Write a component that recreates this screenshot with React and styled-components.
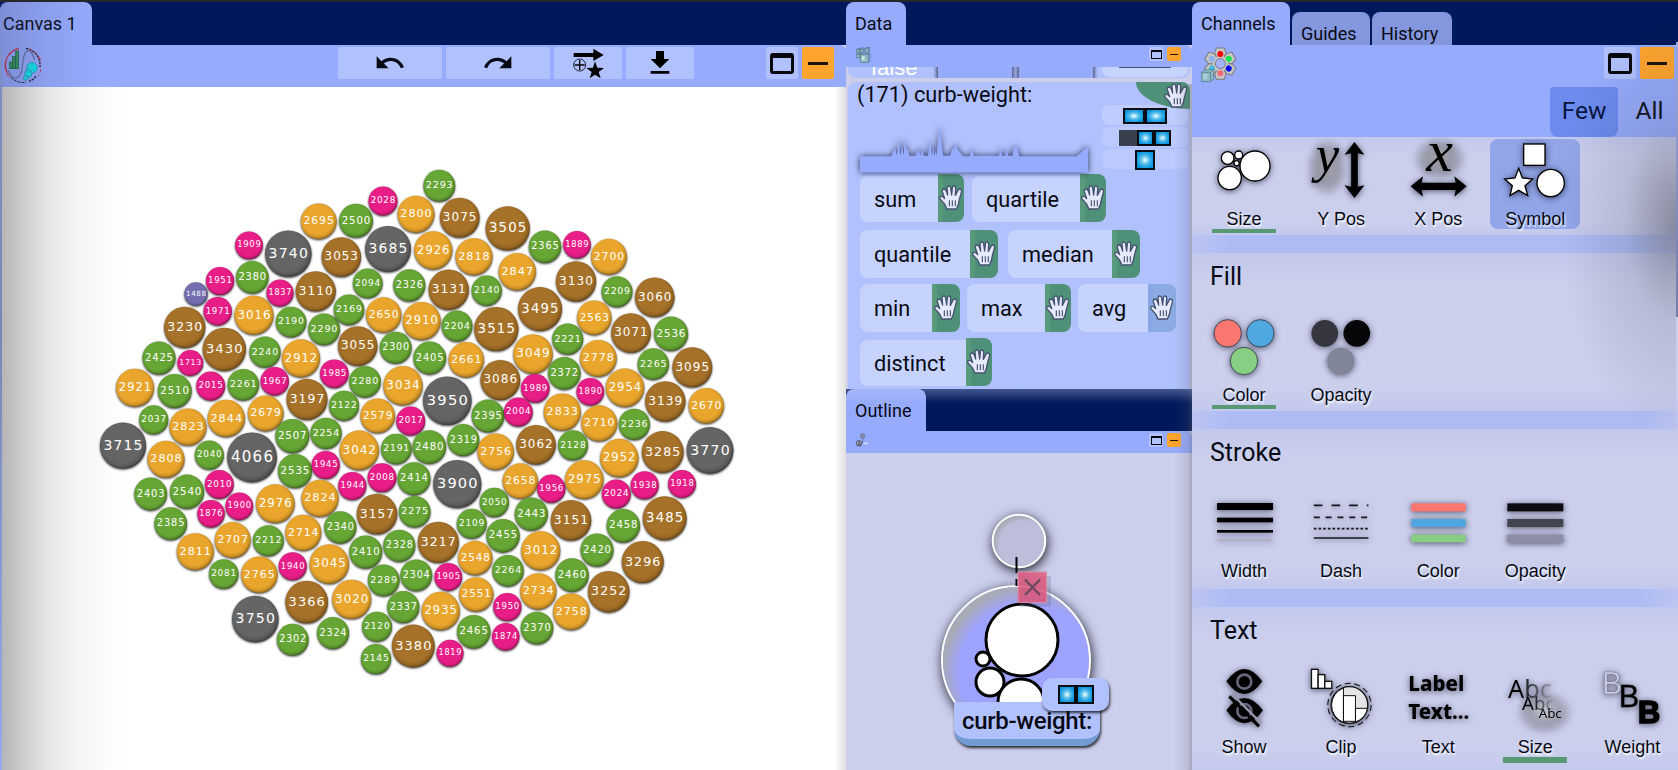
import React from "react";
import styled, { createGlobalStyle } from "styled-components";
import { MdUndo, MdRedo } from "react-icons/md";

const Global = createGlobalStyle`
  * { box-sizing: border-box; }
  html, body { margin: 0; background: #cbcfec; overflow: hidden; }
  body { font-family: Roboto, "Liberation Sans", sans-serif; color: #070a14; }
  svg { display: block; }
`;

const c = {
  navy: "#00185c",
  bar: "#97abfd",
  card: "#b1c1fd",
  chip: "#c7d3ff",
  panel: "#cbcfec",
  green: "#4f9178",
  orange: "#ffa52e",
};

/* ---------- window frame ---------- */

const Workspace = styled.div`
  width: 1678px;
  height: 770px;
  display: grid;
  grid-template-columns: 846px 346px 486px;
  border-top: 2px solid #25272b;
  overflow: hidden;
`;

const Column = styled.div`
  display: flex;
  flex-direction: column;
  min-width: 0;
  min-height: 0;
  position: relative;
  overflow: hidden;
`;

const TabStrip = styled.div`
  height: ${(p) => p.$h || 43}px;
  flex: none;
  display: flex;
  align-items: flex-end;
  gap: 2px;
  background: ${c.navy};
`;

const Tab = styled.div`
  width: ${(p) => p.$w}px;
  height: ${(p) => (p.$idle ? 33 : p.$h || 43)}px;
  padding: ${(p) => (p.$idle ? "11px 9px" : "11px 0 0")};
  padding-left: ${(p) => p.$pad || 9}px;
  border-radius: 8px 8px 0 0;
  background: ${(p) => (p.$idle ? "#8496dd" : c.bar)};
  font-size: 18px;
  line-height: 21px;
  white-space: nowrap;
`;

const Toolbar = styled.div`
  flex: none;
  height: ${(p) => p.$h}px;
  display: flex;
  align-items: flex-start;
  padding: 2px ${(p) => p.$pr || 12}px 0 ${(p) => p.$pl || 4}px;
  background: ${c.bar};
  border-radius: 0 6px 0 0;
`;

const Spacer = styled.div`
  flex: ${(p) => (p.$w ? "none" : 1)};
  width: ${(p) => p.$w || 0}px;
`;

const ToolButton = styled.div`
  width: ${(p) => p.$w}px;
  height: ${(p) => p.$h || 32}px;
  margin-right: ${(p) => (p.$mr === undefined ? 4 : p.$mr)}px;
  display: flex;
  align-items: center;
  justify-content: center;
  border-radius: 2px;
  background: ${(p) => (p.$hot ? c.orange : c.card)};
`;

const Minus = styled.div`
  width: ${(p) => p.$w}px;
  height: ${(p) => p.$t}px;
  background: #1c1408;
`;

const MaxGlyph = styled.div`
  width: ${(p) => (p.$small ? 11 : 24)}px;
  height: ${(p) => (p.$small ? 9 : 21)}px;
  border: ${(p) => (p.$small ? 1 : 3)}px solid #05070d;
  border-top-width: ${(p) => (p.$small ? 2 : 5)}px;
  border-radius: ${(p) => (p.$small ? 0 : 3)}px;
`;

/* Soft darkening that lies over a panel's edge */
const EdgeShade = styled.div`
  position: absolute;
  pointer-events: none;
  left: ${(p) => p.$l};
  right: ${(p) => p.$r};
  top: ${(p) => p.$t || 0}px;
  height: ${(p) => p.$h}px;
  width: ${(p) => p.$w}px;
  background: ${(p) => p.$bg};
`;

/* ---------- canvas ---------- */

const CanvasArea = styled.div`
  flex: 1;
  margin-left: 2px;
  background: #fff;
`;

const BUBBLES = [
  [2028, 383, 201], [2695, 318.7, 221.3], [2500, 356, 220.7], [2800, 416, 214.3], [1909, 249, 245.3],
  [3740, 288.3, 253.7], [3053, 341.3, 257], [3685, 388, 249], [1951, 220, 281], [2380, 252.3, 277.3],
  [1488, 196, 294], [1837, 280, 293], [3110, 315.7, 291.3], [2094, 367.7, 283.3], [2326, 409.3, 285.3],
  [1971, 217.7, 311.3], [3016, 254, 315.3], [2190, 291, 322], [2290, 324, 329.3], [2169, 349, 309.7],
  [2650, 383.7, 315], [3230, 184.7, 327.3], [3430, 224.3, 349.3], [2240, 265, 352], [2912, 301, 358.3],
  [3055, 357.7, 346], [2300, 395.7, 347.7], [2425, 159, 358], [1713, 190.3, 363], [1985, 334.3, 373.7],
  [2280, 365, 381.7], [3034, 403, 385.7], [2921, 135, 387.7], [2510, 174.7, 391], [2015, 210.7, 386],
  [2261, 243.3, 384.7], [1967, 274.7, 381.3], [3197, 307, 399.3], [2122, 344, 405.7], [2579, 377.7, 415.8],
  [2293, 439.3, 185.7], [3075, 459.7, 217.7], [3505, 507.7, 228.3], [2926, 433.3, 250.3], [2818, 474, 256.7],
  [2847, 517.3, 271.7], [2365, 545, 246.7], [1889, 577, 244.7], [2700, 609, 256.7], [3130, 576, 281.3],
  [2209, 617, 291.7], [3060, 654.7, 297.3], [3131, 448.7, 289.7], [2140, 486.7, 290.7], [3495, 540, 309],
  [2563, 594.3, 317.7], [3071, 631, 333], [2536, 671, 333.7], [2910, 421.7, 321], [2204, 457, 326],
  [3515, 496.3, 329], [2221, 567.7, 339], [3049, 533, 354], [2778, 598.3, 358.3], [2265, 653.3, 364],
  [3095, 692.3, 367.3], [2405, 429.7, 358], [2661, 466.3, 359.7], [3086, 500.3, 380], [2372, 564.3, 373.3],
  [1989, 535.3, 388.3], [1890, 590.3, 391.7], [2954, 625, 387.7], [3139, 665.3, 401.3], [2670, 706.3, 405.7],
  [3950, 447.3, 400.7], [2395, 488, 415.8], [2004, 518.3, 412], [2833, 562.3, 412], [2710, 599.3, 423.3],
  [2236, 634.3, 424.3], [2017, 410.7, 421], [2037, 153.7, 419.7], [2823, 188, 427], [2844, 226.3, 418.3],
  [2679, 265.7, 413.3], [3715, 123, 445.7], [2808, 166, 459.3], [2040, 209.3, 455], [4066, 252, 457.3],
  [2507, 292.3, 436], [2254, 326, 433.3], [2535, 295, 471], [1945, 325.7, 465], [3042, 359.3, 450.3],
  [2191, 396.3, 449], [2480, 429.3, 447], [2403, 150.7, 494], [2540, 187, 491.7], [2010, 219.3, 484.3],
  [1900, 239.3, 506.3], [1876, 211, 513.7], [2976, 275.3, 503.7], [2824, 320, 498.3], [1944, 352.3, 486],
  [2008, 382, 477.7], [2414, 414, 478.7], [2385, 170.7, 523.7], [2707, 232.7, 540], [2212, 268.3, 540.7],
  [2714, 303.3, 532.7], [2340, 340.3, 527.3], [3157, 377, 514], [2275, 414.7, 511.7], [2811, 195.3, 551.7],
  [2081, 223.7, 574], [2765, 259.3, 574.7], [1940, 292.7, 566.3], [3045, 329.3, 564], [2410, 365.7, 552],
  [2328, 399.3, 545.7], [2289, 383.7, 580.3], [2304, 416.3, 575.3], [3750, 255.3, 619], [3366, 306.7, 602],
  [3020, 351.7, 599.3], [2337, 403.3, 607], [2302, 292.7, 639.7], [2324, 333, 633], [2120, 377, 626.7],
  [2145, 376, 659], [3380, 413.3, 646], [2319, 463.3, 440], [2756, 495.7, 451.7], [3062, 536, 444.7],
  [2128, 573, 445.3], [2952, 619.3, 458], [3285, 662.7, 452], [3770, 710, 450.3], [3900, 457.3, 484],
  [2658, 520.3, 481], [1956, 551.3, 488.7], [2975, 584.3, 479.7], [2024, 616.3, 494], [1938, 644.7, 485.3],
  [1918, 682, 484], [2050, 494.3, 502.3], [2109, 471.7, 523.7], [2455, 503, 535.7], [2443, 531.3, 514],
  [3151, 571, 520.3], [2458, 623.3, 525.7], [3485, 664.7, 518.3], [3217, 438.3, 542.3], [2548, 475.3, 558],
  [3012, 540.7, 550.7], [2420, 597, 550], [3296, 642.7, 562], [2264, 508, 570.7], [1905, 448.3, 577],
  [2460, 572, 575], [3252, 608.7, 591.7], [2551, 476.3, 594.3], [2734, 538.3, 591.3], [2935, 440.7, 611],
  [1950, 507.3, 607], [2758, 571.3, 611.7], [2465, 473.7, 631.7], [2370, 537, 628], [1874, 505.7, 636.7],
  [1819, 450, 653.3],
];

const fillFor = (v) =>
  v < 1500 ? "#726eb0" : v < 2030 ? "#e91d87" : v < 2545 ? "#66a634" : v < 3050 ? "#eaa62c" : v < 3600 ? "#a67128" : "#656565";

const BubbleGroup = styled.g`
  filter: drop-shadow(0.8px 1.2px 1.3px rgba(0, 0, 0, 0.75));
`;

const BubbleText = styled.text`
  font-family: "DejaVu Sans", sans-serif;
  fill: #fff;
  text-anchor: middle;
  letter-spacing: 0.085em;
`;

function BubbleChart() {
  return (
    <svg width="843" height="683" viewBox="2 87 843 683">
      <defs>
        <radialGradient id="bulge" cx="0.47" cy="0.45" r="0.56">
          <stop offset="0.74" stopColor="#000" stopOpacity="0" />
          <stop offset="0.88" stopColor="#000" stopOpacity="0.12" />
          <stop offset="1" stopColor="#000" stopOpacity="0.42" />
        </radialGradient>
      </defs>
      {BUBBLES.map(([v, x, y]) => {
        const r = 13.9 + 0.0051 * (v - 1909);
        const size = r * 0.605;
        return (
          <g key={v}>
            <BubbleGroup>
              <circle cx={x} cy={y} r={r} fill={fillFor(v)} />
            </BubbleGroup>
            <circle cx={x} cy={y} r={r} fill="url(#bulge)" />
            <BubbleText x={x + size * 0.04} y={y - 0.9 + size * 0.365} fontSize={size}>{v}</BubbleText>
          </g>
        );
      })}
    </svg>
  );
}

/* ---------- shared glyphs ---------- */

function Hand({ size = 25 }) {
  return (
    <svg width={size} height={size} viewBox="0 0 75 75">
      <path
        d="M22 68 L16 56 L3 42 Q0 36 6 34 Q11 33 17 41 L10 20 Q9 13 14 12 Q19 11 22 18 L26 30 L24 9 Q24 3 29 3 Q34 3 35 9 L38 30 L40 8 Q41 2 46 3 Q50 4 50 10 L49 31 L57 16 Q60 10 65 13 Q69 16 67 22 L61 44 Q60 58 52 72 L23 72 Z"
        fill="#e6eafc" stroke="#44516f" strokeWidth="4" strokeLinejoin="round"
      />
      <path d="M31 46 V64 M40 46 V64 M49 46 V64" stroke="#44516f" strokeWidth="3.4" />
    </svg>
  );
}

const Cell = styled.div`
  width: ${(p) => p.$w}px;
  height: ${(p) => p.$h}px;
  border: 2px solid #0a0d14;
  background: ${(p) => (p.$off ? "#3a3f50" : "radial-gradient(ellipse, #d5f3fc 8%, #53bdea 38%, #0793dd 78%)")};
  border-color: ${(p) => (p.$off ? "#3a3f50" : "#0a0d14")};
`;

/* ---------- data panel ---------- */

const DataBody = styled.div`
  height: 322px;
  flex: none;
  padding: 0 2px;
  overflow: hidden;
  background: ${c.panel};
`;

const PeekRow = styled.div`
  height: 11px;
  display: flex;
  align-items: flex-end;
  overflow: hidden;
  border-radius: 0 0 8px 8px;
  background: ${c.card};
`;

const PeekText = styled.div`
  width: 88px;
  padding-left: 23px;
  flex: none;
  color: #fff;
  font-family: "Liberation Sans", sans-serif;
  font-size: 22px;
  line-height: 21px;
`;

const PeekBar = styled.div`
  width: ${(p) => p.$w}px;
  height: 11px;
  flex: none;
  margin-left: ${(p) => p.$ml}px;
  background: ${c.bar};
  box-shadow: 0 0 3px 2px rgba(20, 25, 50, 0.6);
`;

const PeekPill = styled.div`
  width: 86px;
  height: 10px;
  flex: none;
  margin: 0 2px 1px auto;
  padding: 0 17px;
  border-radius: 0 0 8px 8px;
  background: ${c.chip};
`;

const PeekLine = styled.div`
  height: 1px;
  background: #4a536c;
`;

const DataCard = styled.div`
  position: relative;
  height: 307px;
  margin-top: 4px;
  border-radius: 8px 8px 0 0;
  background: ${c.card};
`;

const CardHead = styled.div`
  height: 92px;
  display: flex;
  justify-content: space-between;
`;

const CardTitle = styled.div`
  padding-left: 9px;
  font-size: 21.7px;
  line-height: 26px;
`;

const Spark = styled.svg`
  margin: 17px 0 0 3px;
  overflow: visible;
  filter: drop-shadow(0 0 3px rgba(20, 25, 60, 0.85));
`;

const GripCorner = styled.div`
  position: absolute;
  top: 0;
  right: 0;
  width: 54px;
  height: 27px;
  padding: 1px 1px 0 0;
  display: flex;
  justify-content: flex-end;
  border-radius: 0 8px 0 100%;
  background: ${c.green};
`;

const Types = styled.div`
  width: 86px;
  margin: 23px 2px 0 0;
  display: flex;
  flex-direction: column;
  gap: 2px;
`;

const TypePill = styled.div`
  height: 20px;
  padding-top: 1px;
  display: flex;
  align-items: center;
  justify-content: center;
  border-radius: 7px;
  background: ${(p) => (p.$dim ? "#bbc9ff" : "#bfccff")};
`;

const ChipRow = styled.div`
  display: flex;
  align-items: flex-end;
  gap: ${(p) => p.$gap}px;
  height: 48px;
  margin: 0 0 ${(p) => p.$mb || 6}px 12px;
`;

const Chip = styled.div`
  width: ${(p) => p.$w}px;
  height: 48px;
  display: flex;
  align-items: flex-end;
  border-radius: 8px;
  overflow: hidden;
`;

const ChipLabel = styled.div`
  flex: 1;
  height: ${(p) => p.$h || 48}px;
  padding-left: 14px;
  display: flex;
  align-items: center;
  border-radius: 7px 0 0 7px;
  background: ${c.chip};
  font-size: 21.7px;
`;

const Grip = styled.div`
  width: ${(p) => p.$w || 26}px;
  height: 48px;
  padding-top: 11px;
  display: flex;
  justify-content: center;
  border-left: 5px solid ${(p) => (p.$idle ? "#88a7e3" : "#589a7b")};
  background: ${(p) => (p.$idle ? "#8caae3" : c.green)};
  svg { flex: none; margin-left: -4px; }
`;

const CHIP_ROWS = [
  { gap: 8, mb: 8, chips: [["sum", 104, 26, 46], ["quartile", 134, 26, 46]] },
  { gap: 10, chips: [["quantile", 138, 28], ["median", 132, 28]] },
  { gap: 7, chips: [["min", 100, 28], ["max", 104, 26], ["avg", 98, 28, 48, true]] },
  { gap: 8, chips: [["distinct", 132, 26, 46]] },
];

/* ---------- outline panel ---------- */

const OutlineBody = styled.div`
  flex: 1;
  position: relative;
  background: ${c.panel};
`;

const FieldTag = styled.div`
  position: absolute;
  left: 108px;
  top: 249px;
  width: 146px;
  height: 44px;
  text-align: center;
  font-size: 24px;
  font-weight: 500;
  letter-spacing: -0.35px;
  line-height: 38px;
  white-space: nowrap;
  border-bottom: 7px solid #709bd3;
  border-radius: 2px 8px 17px 17px;
  background: ${c.card};
  box-shadow: 1px 2px 3px rgba(0, 0, 0, 0.8);
`;

const TypeTag = styled.div`
  position: absolute;
  left: 196px;
  top: 225px;
  width: 67px;
  height: 33px;
  display: flex;
  align-items: center;
  justify-content: center;
  border-radius: 10px;
  background: ${c.card};
  box-shadow: 1px 2px 3px rgba(0, 0, 0, 0.75);
`;

const Diagram = styled.svg`
  overflow: hidden;
  .glow { filter: drop-shadow(1px 3px 6px rgba(0, 0, 10, 0.85)); }
`;

/* ---------- channels panel ---------- */

const ChannelBody = styled.div`
  flex: 1;
  overflow: hidden;
  background: ${c.panel};
`;

const FilterRow = styled.div`
  height: 50px;
  flex: none;
  display: flex;
  justify-content: flex-end;
  background: ${c.bar};
`;

const FilterTab = styled.div`
  width: ${(p) => p.$w}px;
  height: 50px;
  display: flex;
  align-items: center;
  justify-content: center;
  padding: 0 0 3px ${(p) => p.$pad || 0}px;
  font-size: 24.5px;
  border-radius: 4px 4px 8px 8px;
  background: ${(p) => (p.$on ? "#6b8bee" : "transparent")};
  color: ${(p) => (p.$on ? "#071440" : "#10141f")};
`;

const Section = styled.div`
  height: ${(p) => p.$h}px;
  padding-top: ${(p) => p.$pt || 0}px;
  background: linear-gradient(#c3c9ee, ${c.panel} 18%, ${c.panel} 85%, #c3c9ee);
`;

const Band = styled.div`
  height: 18px;
  background: linear-gradient(90deg, #bcc5f1, #aebbf3 8%, #aebbf3 92%, #bcc5f1);
`;

const SectionTitle = styled.div`
  height: ${(p) => p.$h}px;
  padding: 9px 0 0 18px;
  font-size: 25px;
  line-height: 29px;
`;

const Cells = styled.div`
  display: flex;
  gap: 7.1px;
  padding-left: 7px;
`;

const Channel = styled.div`
  width: 90px;
  height: 90px;
  flex: none;
  border-radius: 8px;
  background: ${(p) => (p.$on ? "#91a5e8" : "transparent")};
`;

const ChannelArt = styled.svg`
  overflow: visible;
  filter: drop-shadow(0 1px 3px rgba(10, 12, 30, 0.65));
  font-family: "Noto Sans", sans-serif;
`;

const ChannelLabel = styled.div`
  height: 24px;
  padding-top: 3px;
  text-align: center;
  font-family: "Liberation Sans", sans-serif;
  font-size: 18px;
  line-height: 22px;
  text-shadow: 1px 2px 2px #fff;
`;

const Underline = styled.div`
  width: 64px;
  height: ${(p) => p.$h}px;
  margin-left: 13px;
  background: #589872;
`;

/* Artwork uses a canvas of 270 x 198 units per channel */
const ART = {
  size: ["27 417", (
    <g fill="#fff" stroke="#000" strokeWidth="4">
      <circle cx="195" cy="498" r="45" /><circle cx="119" cy="534" r="35" /><circle cx="113" cy="474" r="19" />
      <circle cx="146" cy="465" r="12" /><circle cx="140" cy="490" r="8" />
    </g>
  )],
  ypos: ["318.6 417", (
    <g>
      <ellipse cx="412" cy="500" rx="62" ry="88" fill="url(#haze)" />
      <text x="378" y="517" fontFamily="Liberation Serif, serif" fontStyle="italic" fontSize="158">y</text>
      <path d="M494 426 L524 464 L504 460 V560 L524 556 L494 594 L464 556 L484 560 V460 L464 464 Z" />
    </g>
  )],
  xpos: ["610 417", (
    <g>
      <defs>
        <radialGradient id="haze"><stop offset="0.3" stopColor="#a9a9b0" stopOpacity="0.8" /><stop offset="1" stopColor="#b0b0b8" stopOpacity="0" /></radialGradient>
      </defs>
      <ellipse cx="750" cy="475" rx="80" ry="66" fill="url(#haze)" />
      <text x="710" y="514" fontFamily="Liberation Serif, serif" fontStyle="italic" fontSize="180">x</text>
      <path d="M663 559 L700 529 L696 548 H798 L794 529 L831 559 L794 590 L798 570 H696 L700 590 Z" />
    </g>
  )],
  symbol: ["902 417", (
    <g fill="#fff" stroke="#000" strokeWidth="4">
      <rect x="1003" y="432" width="64" height="64" />
      <path d="M988 505 L999 534 L1030 537 L1007 557 L1015 587 L988 571 L962 587 L969 557 L946 537 L977 534 Z" />
      <circle cx="1084" cy="549" r="41" />
    </g>
  )],
  fillColor: ["27 225", (
    <g stroke="#333b4c" strokeWidth="2.5">
      <circle cx="113" cy="280" r="41" fill="#fa7770" /><circle cx="211" cy="280" r="41" fill="#50a8e0" />
      <circle cx="162" cy="363" r="41" fill="#88ce83" />
    </g>
  )],
  fillOpacity: ["318.6 225", (
    <g>
      <circle cx="405" cy="280" r="40" fill="#34353f" /><circle cx="501" cy="280" r="40" fill="#070709" />
      <circle cx="453" cy="363" r="40" fill="#818598" />
    </g>
  )],
  strokeWidth: ["27 183", (
    <g>
      <rect x="81" y="219" width="168" height="21" /><rect x="81" y="263" width="168" height="14" />
      <rect x="81" y="300" width="168" height="8" /><rect x="81" y="329" width="168" height="4" fill="#aaaebd" />
    </g>
  )],
  strokeDash: ["318.6 183", (
    <g stroke="#17181d" strokeWidth="5">
      <path d="M372 226 H536" strokeDasharray="26 27" /><path d="M372 262 H536" strokeDasharray="18 17.5" />
      <path d="M372 296 H536" strokeDasharray="8 6" /><path d="M372 324 H536" />
    </g>
  )],
  strokeColor: ["610 183", (
    <g>
      <rect x="665" y="220" width="163" height="24" fill="#fb7770" /><rect x="665" y="267" width="163" height="24" fill="#50a7df" />
      <rect x="665" y="314" width="163" height="23" fill="#88ce83" />
    </g>
  )],
  strokeOpacity: ["902 183", (
    <g>
      <rect x="954" y="220" width="168" height="24" fill="#0c0d10" /><rect x="954" y="267" width="168" height="24" fill="#42444f" />
      <rect x="954" y="314" width="168" height="24" fill="#8b8ea4" />
    </g>
  )],
  show: ["27 711", (
    <g>
      <path d="M109 754 Q163 680 217 754 Q163 830 109 754Z" /><circle cx="163" cy="755" r="21" fill="#000" stroke="#65677b" strokeWidth="8" />
      <path d="M109 841 Q163 767 219 841 Q163 919 109 841Z" /><circle cx="163" cy="843" r="21" fill="#000" stroke="#65677b" strokeWidth="8" />
      <path d="M126 792 L214 880" stroke="#9699ae" strokeWidth="7" />
      <path d="M118 799 L207 889" stroke="#000" strokeWidth="9" />
    </g>
  )],
  clip: ["318.6 711", (
    <g fill="#fff" stroke="#111" strokeWidth="4">
      <rect x="365" y="718" width="20" height="57" /><rect x="385" y="734" width="20" height="41" /><rect x="405" y="754" width="21" height="21" />
      <circle cx="479" cy="825" r="55" fill="#e4e4e6" />
      <path d="M461 774 A55 55 0 0 0 461 877 Z M461 797 H497 V874 H461 Z M497 835 H533 A55 55 0 0 1 497 876 Z" strokeWidth="3" />
      <circle cx="479" cy="825" r="65" fill="none" strokeWidth="3.2" strokeDasharray="18 11" />
    </g>
  )],
  text: ["610 711", (
    <g fontWeight="800" fontSize="66">
      <text x="656" y="784" textLength="168" lengthAdjust="spacingAndGlyphs">Label</text>
      <text x="656" y="867" textLength="183" lengthAdjust="spacingAndGlyphs">Text...</text>
    </g>
  )],
  textSize: ["902 711", (
    <g>
      <defs>
        <linearGradient id="fade"><stop offset="0.25" stopColor="#000" /><stop offset="1" stopColor="#9fa3b6" /></linearGradient>
        <radialGradient id="mist"><stop offset="0.2" stopColor="#b9bac6" /><stop offset="1" stopColor="#b9bac6" stopOpacity="0" /></radialGradient>
      </defs>
      <ellipse cx="1066" cy="845" rx="84" ry="65" fill="url(#mist)" />
      <text x="956" y="804" fontSize="76" fill="url(#fade)">Abc</text>
      <text x="998" y="840" fontSize="56" fill="url(#fade)">Abc</text>
      <text x="1048" y="863" fontSize="40">Abc</text>
    </g>
  )],
  weight: ["1193 711", (
    <g fontFamily="Liberation Sans, sans-serif">
      <text x="1237" y="791" fontSize="92" fill={c.panel} stroke="#777a8a" strokeWidth="2">B</text>
      <text x="1288" y="831" fontSize="92" stroke="#000" strokeWidth="1">B</text>
      <text x="1346" y="880" fontSize="92" fontWeight="700" stroke="#000" strokeWidth="5">B</text>
    </g>
  )],
};

function ChannelCell({ art, label, active, underline }) {
  const [origin, drawing] = ART[art];
  return (
    <Channel $on={active}>
      <ChannelArt width="90" height="66" viewBox={`${origin} 270 198`}>{drawing}</ChannelArt>
      <ChannelLabel>{label}</ChannelLabel>
      {underline ? <Underline $h={underline} /> : null}
    </Channel>
  );
}

/* ---------- window icons ---------- */

const CanvasLogo = () => (
  <svg width="37" height="37" viewBox="0 0 111 111">
    <path d="M45 4 A52 52 0 0 0 16 88" fill="none" stroke="#d22c3c" strokeWidth="4" strokeDasharray="40 2 8 2" />
    <path d="M20 90 A52 52 0 0 0 66 106" fill="none" stroke="#18223c" strokeWidth="3" strokeDasharray="9 3" />
    <path d="M66 4 A52 52 0 0 1 108 60 M96 88 A52 52 0 0 1 76 103" fill="none" stroke="#171a2c" strokeWidth="4" strokeDasharray="7 3" />
    <path d="M74 6 A52 52 0 0 1 102 87" fill="none" stroke="#d22c3c" strokeWidth="3" strokeDasharray="12 7" />
    <path d="M12 70 C28 105 50 100 55 60 C58 10 76 -10 92 38" fill="none" stroke="#6776a8" strokeWidth="4" />
    <g fill="#329653" stroke="#1c6538" strokeWidth="2"><rect x="17" y="45" width="8" height="20" /><rect x="25" y="28" width="9" height="37" /><rect x="35" y="12" width="9" height="53" /></g>
    <g fill="#16e3ea" stroke="#218da5" strokeWidth="2"><circle cx="84" cy="62" r="16" /><circle cx="73" cy="80" r="11" /><circle cx="65" cy="93" r="7" /></g>
  </svg>
);

const CubesIcon = () => (
  <svg width="15" height="17" viewBox="0 0 45 50">
    {[[1, 4, 9], [12, 2, 9], [27, 1, 10], [2, 18, 10], [14, 18, 24]].map(([x, y, s]) => (
      <g key={`${x}-${y}`}>
        <rect x={x} y={y + 4} width={s} height={s} fill="#8fb9c0" stroke="#557b8c" strokeWidth="2" />
        <path d={`M${x} ${y + 4} l4 -4 h${s} v${s} l-4 4 M${x + s} ${y + 4} l4 -4`} fill="none" stroke="#4c7081" strokeWidth="2" />
      </g>
    ))}
    <path d="M17 27 h9 v12 h-9z" fill="#c8e6e4" />
  </svg>
);

const OutlineIcon = () => (
  <svg width="13" height="14" viewBox="0 0 39 42">
    <path d="M20 16 V30" stroke="#4e5568" strokeWidth="2" />
    <circle cx="20" cy="9" r="7" fill="#8289a6" stroke="#6e748b" strokeWidth="2" />
    <circle cx="9" cy="31" r="8" fill="#aeb4c4" stroke="#424858" strokeWidth="3" />
    <path d="M9 23 L15 35 H5 Z" fill="#596071" />
    <path d="M23 31 H37" stroke="#dfe5fa" strokeWidth="5" strokeDasharray="5 2" />
  </svg>
);

const ChannelsLogo = () => {
  const dots = [["#f00", 0], ["#0be550", 60], ["#0008f0", 120], ["#f36a76", 180], ["#42b6dc", 240], ["#8fb1ef", 300]];
  return (
    <svg width="36" height="36" viewBox="0 0 108 108">
      <g fill="#c6c6c2" stroke="#77797d" strokeWidth="3">
        {dots.map(([, a]) => <path key={a} transform={`rotate(${a} 58 50)`} d="M46 3 h24 l5 16 -8 17 h-18 l-8 -17z" />)}
      </g>
      <circle cx="58" cy="50" r="23" fill="#c6c6c2" />
      <circle cx="58" cy="50" r="15" fill="#a6b5f5" stroke="#727985" strokeWidth="3" />
      {dots.map(([f, a]) => <circle key={a} transform={`rotate(${a} 58 50)`} cx="58" cy="21" r="9" fill={f} />)}
      <path d="M2 76 l10 -8 h26 v27 l-9 9 h-27z" fill="#8cb9c4" stroke="#4e7584" strokeWidth="2" />
      <path d="M2 76 h27 v28 M29 76 l9 -8" fill="none" stroke="#4e7584" strokeWidth="2" />
      <path d="M7 81 h12 v16 h-12z" fill="#a9d3d8" />
    </svg>
  );
};

const InsertIcon = () => (
  <svg width="31" height="31" viewBox="0 0 93 93">
    <path d="M2 15 H61 V2 L92 21 L61 39 V27 H2 Z" />
    <circle cx="20" cy="51" r="18" fill="none" stroke="#1b2136" strokeWidth="3" />
    <path d="M20 36 V66 M5 51 H35" stroke="#000" strokeWidth="4" />
    <path d="M66 40 L73 59 L93 60 L77 72 L83 91 L66 80 L50 91 L56 72 L40 60 L60 59 Z" />
  </svg>
);

const SaveIcon = () => (
  <svg width="32" height="32" viewBox="0 0 24 24"><path d="M19 9h-4V3H9v6H5l7 7 7-7zM5 18v2h14v-2H5z" /></svg>
);

const SmallWindowButtons = () => (
  <>
    <ToolButton $w={14} $h={14} $mr={4}><MaxGlyph $small /></ToolButton>
    <ToolButton $w={14} $h={14} $mr={0} $hot><Minus $w={8} $t={1} /></ToolButton>
  </>
);

const sparkPath =
  "M0 141 V92 H94 L104 67 L111 88 L116 38 L121 90 L126 58 L131 90 L134 38 L140 74 L144 68 L148 91 H167 L170 67 L174 88 L178 67 L182 90 L186 67 L191 91 H204 L210 38 L216 91 L220 66 L224 91 L228 67 L230 91 L238 0 L246 66 L250 91 H270 L278 67 L281 72 L286 54 L293 72 L310 92 H329 L337 68 L341 91 H417 L421 67 L426 91 H435 L440 67 L444 91 H457 L462 64 L470 64 L478 92 H650 L684 62 V141 Z";

export default function App() {
  return (
    <>
      <Global />
      <Workspace>
        <Column>
          <TabStrip><Tab $w={92} $pad={3}>Canvas 1</Tab></TabStrip>
          <Toolbar $h={42} $pr={12}>
            <CanvasLogo />
            <Spacer $w={297} />
            <ToolButton $w={104}><MdUndo size={32} /></ToolButton>
            <ToolButton $w={104}><MdRedo size={32} /></ToolButton>
            <ToolButton $w={68}><InsertIcon /></ToolButton>
            <ToolButton $w={68} $mr={0}><SaveIcon /></ToolButton>
            <Spacer />
            <ToolButton $w={32}><MaxGlyph /></ToolButton>
            <ToolButton $w={32} $mr={0} $hot><Minus $w={20} $t={3} /></ToolButton>
          </Toolbar>
          <CanvasArea><BubbleChart /></CanvasArea>
          <EdgeShade $l="2px" $t={85} $w={125} $h={683} $bg="linear-gradient(90deg, rgba(0,0,0,.29), rgba(0,0,0,.2) 16%, rgba(0,0,0,.11) 34%, rgba(0,0,0,.05) 56%, rgba(0,0,0,.015) 80%, transparent)" />
          <EdgeShade $l="0" $t={0} $w={110} $h={85} $bg="linear-gradient(90deg, rgba(50,60,110,.26), rgba(50,60,110,.1) 45%, transparent 90%)" />
          <EdgeShade $l="0" $t={43} $w={2} $h={725} $bg="linear-gradient(#7f8fc7, #7887b8 40%, #97a9ef)" />
          <EdgeShade $r="0" $t={85} $w={12} $h={683} $bg="linear-gradient(90deg, transparent, rgba(0,0,0,.12))" />
        </Column>

        <Column>
          <TabStrip><Tab $w={60}>Data</Tab></TabStrip>
          <Toolbar $h={22} $pl={10} $pr={11}>
            <CubesIcon />
            <Spacer />
            <SmallWindowButtons />
          </Toolbar>
          <DataBody>
            <PeekRow>
              <PeekText>false</PeekText>
              <PeekBar $w={74} $ml={2} />
              <PeekBar $w={74} $ml={7} />
              <PeekPill><PeekLine /></PeekPill>
            </PeekRow>
            <DataCard>
              <CardHead>
                <CardTitle>
                  (171) curb-weight:
                  <Spark width="228" height="48" viewBox="0 0 684 141"><path d={sparkPath} fill={c.bar} /></Spark>
                </CardTitle>
                <Types>
                  <TypePill><Cell $w={22} $h={16} /><Cell $w={22} $h={16} /></TypePill>
                  <TypePill $dim><Cell $w={18} $h={16} $off /><Cell $w={17} $h={16} /><Cell $w={17} $h={16} /></TypePill>
                  <TypePill $dim><Cell $w={20} $h={20} /></TypePill>
                </Types>
              </CardHead>
              {CHIP_ROWS.map((row) => (
                <ChipRow key={row.chips[0][0]} $gap={row.gap} $mb={row.mb}>
                  {row.chips.map(([name, w, grip, h, idle]) => (
                    <Chip key={name} $w={w}>
                      <ChipLabel $h={h}>{name}</ChipLabel>
                      <Grip $w={grip} $idle={idle}><Hand /></Grip>
                    </Chip>
                  ))}
                </ChipRow>
              ))}
              <GripCorner><Hand /></GripCorner>
            </DataCard>
          </DataBody>
          <TabStrip $h={42}><Tab $w={80} $h={42} $pad={9}>Outline</Tab></TabStrip>
          <Toolbar $h={22} $pl={10} $pr={11}>
            <OutlineIcon />
            <Spacer />
            <SmallWindowButtons />
          </Toolbar>
          <OutlineBody>
            <Diagram width="346" height="317" viewBox="0 0 346 317">
              <g className="glow">
                <circle cx="173" cy="88" r="26.3" fill="#bdbfda" stroke="#fff" strokeWidth="2" />
              </g>
              <g className="glow">
                <circle cx="170" cy="207.3" r="74" fill="#9ea3ff" stroke="#fff" strokeWidth="2" />
              </g>
              <defs>
                <radialGradient id="dish" cx="0.58" cy="0.58" r="0.6">
                  <stop offset="0.78" stopColor="#a8aab4" stopOpacity="0" />
                  <stop offset="0.97" stopColor="#a8aab4" />
                </radialGradient>
              </defs>
              <circle cx="170" cy="207.3" r="73" fill="url(#dish)" />
              <circle cx="173" cy="88" r="25.3" fill="url(#dish)" />
              <path d="M170.5 104 V120 M170.5 126 V133" stroke="#000" strokeWidth="2" />
              <g fill="#fff" stroke="#000" strokeWidth="3">
                <circle cx="176" cy="187" r="36" /><circle cx="137" cy="206" r="7" />
                <circle cx="144" cy="229" r="14" /><circle cx="175" cy="249" r="23" />
              </g>
              <rect x="174" y="123" width="31" height="31" fill="#5d6484" opacity="0.25" />
              <rect x="172" y="119" width="28.5" height="30.5" fill="#e0557b" fillOpacity="0.82" stroke="#dc8da6" />
              <path d="M179 126.5 L194 142 M194 126.5 L179 142" stroke="#68475f" strokeWidth="2.3" />
            </Diagram>
            <FieldTag>curb-weight:</FieldTag>
            <TypeTag><Cell $w={18} $h={19} /><Cell $w={18} $h={19} /></TypeTag>
          </OutlineBody>
          <EdgeShade $r="0" $t={82} $w={18} $h={686} $bg="linear-gradient(90deg, transparent, rgba(90,90,100,.15) 75%, rgba(90,90,100,.36))" />
          <EdgeShade $l="0" $t={387} $w={346} $h={14} $bg="linear-gradient(rgba(190,200,235,.35), transparent)" />
        </Column>

        <Column>
          <TabStrip>
            <Tab $w={98}>Channels</Tab>
            <Tab $w={78} $idle>Guides</Tab>
            <Tab $w={80} $idle>History</Tab>
          </TabStrip>
          <Toolbar $h={42} $pl={9} $pr={4}>
            <ChannelsLogo />
            <Spacer />
            <ToolButton $w={32}><MaxGlyph /></ToolButton>
            <ToolButton $w={34} $mr={0} $hot><Minus $w={20} $t={3} /></ToolButton>
          </Toolbar>
          <FilterRow>
            <FilterTab $w={68} $on>Few</FilterTab>
            <FilterTab $w={60} $pad={3}>All</FilterTab>
          </FilterRow>
          <ChannelBody>
            <Section $h={98} $pt={2}>
              <Cells>
                <ChannelCell art="size" label="Size" underline={4} />
                <ChannelCell art="ypos" label="Y Pos" />
                <ChannelCell art="xpos" label="X Pos" />
                <ChannelCell art="symbol" label="Symbol" active />
              </Cells>
            </Section>
            <Band />
            <Section $h={158}>
              <SectionTitle $h={62}>Fill</SectionTitle>
              <Cells>
                <ChannelCell art="fillColor" label="Color" underline={4} />
                <ChannelCell art="fillOpacity" label="Opacity" />
              </Cells>
            </Section>
            <Band />
            <Section $h={160}>
              <SectionTitle $h={62}>Stroke</SectionTitle>
              <Cells>
                <ChannelCell art="strokeWidth" label="Width" />
                <ChannelCell art="strokeDash" label="Dash" />
                <ChannelCell art="strokeColor" label="Color" />
                <ChannelCell art="strokeOpacity" label="Opacity" />
              </Cells>
            </Section>
            <Band />
            <Section $h={165}>
              <SectionTitle $h={60}>Text</SectionTitle>
              <Cells>
                <ChannelCell art="show" label="Show" />
                <ChannelCell art="clip" label="Clip" />
                <ChannelCell art="text" label="Text" />
                <ChannelCell art="textSize" label="Size" underline={6} />
                <ChannelCell art="weight" label="Weight" />
              </Cells>
            </Section>
          </ChannelBody>
          <EdgeShade $r="2px" $w={115} $h={440} $bg="radial-gradient(ellipse 100% 50% at 100% 50%, rgba(35,38,45,.4), rgba(35,38,45,.12) 45%, transparent)" />
          <EdgeShade $r="0" $t={40} $w={2} $h={275} $bg="linear-gradient(#9aa7dc, #707da8)" />
        </Column>
      </Workspace>
    </>
  );
}
